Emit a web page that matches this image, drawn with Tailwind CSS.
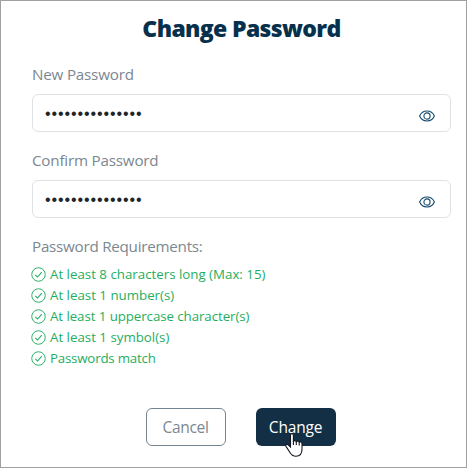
<!DOCTYPE html>
<html lang="en">
<head>
  <meta charset="utf-8">
  <title>Change Password</title>
  <script src="https://cdn.jsdelivr.net/npm/@tailwindcss/browser@4"></script>
</head>
<body class="bg-white font-['Open_Sans','Noto_Sans',sans-serif]">
  <svg class="hidden">
    <symbol id="check" viewBox="0 0 16 16">
      <circle cx="8" cy="8" r="7.2" fill="none" stroke="currentColor" stroke-width="1" />
      <path d="M4.6 8.3L7 10.7L11.5 5.4" fill="none" stroke="currentColor" stroke-width="1.1" />
    </symbol>
    <symbol id="eye" viewBox="0 0 16 16">
      <path d="M.6 8C3.6 1.4 12.4 1.4 15.4 8C12.4 14.6 3.6 14.6 .6 8z" fill="none" stroke="currentColor" stroke-width="1.1" />
      <circle cx="8" cy="8" r="3.1" fill="none" stroke="currentColor" stroke-width="1.1" />
    </symbol>
  </svg>

  <form class="flex h-[468px] w-[467px] flex-col border border-[#a0a0a0] pr-[15px] pl-[31px]">
    <h1 class="mt-[11px] text-center text-[23px] leading-8 font-extrabold whitespace-nowrap text-[#06304b] tracking-[-0.65px]">Change Password</h1>

    <label for="new" class="mt-[18px] text-[15.2px] leading-6 text-[#7b8791] tracking-[-0.2px]">New Password</label>
    <div class="mt-2 flex h-[38px] items-center rounded-md border border-[#dee2e6] pr-[15px] pl-3">
      <input id="new" type="password" value="passwordpasswor" class="min-w-0 grow pt-0.5 font-['Liberation_Sans',sans-serif] text-[16px] tracking-[0.9px] text-[#212529] outline-none">
      <svg class="mt-[5px] h-4 w-4 text-[#12486a]"><use href="#eye" /></svg>
    </div>

    <label for="confirm" class="mt-4 text-[15.2px] leading-6 text-[#7b8791] tracking-[-0.2px]">Confirm Password</label>
    <div class="mt-2 flex h-[38px] items-center rounded-md border border-[#dee2e6] pr-[15px] pl-3">
      <input id="confirm" type="password" value="passwordpasswor" class="min-w-0 grow pt-0.5 font-['Liberation_Sans',sans-serif] text-[16px] tracking-[0.9px] text-[#212529] outline-none">
      <svg class="mt-[5px] h-4 w-4 text-[#12486a]"><use href="#eye" /></svg>
    </div>

    <p class="mt-4 text-[15.2px] leading-6 text-[#7b8791] tracking-[-0.25px]">Password Requirements:</p>
    <ul class="mt-1.5 text-[13.3px] leading-[21px] text-[#1fae5e]">
      <li class="flex items-center gap-1"><svg class="-ml-px h-[15px] w-[15px]"><use href="#check" /></svg><span>At least 8 characters long (Max: 15)</span></li>
      <li class="flex items-center gap-1"><svg class="-ml-px h-[15px] w-[15px]"><use href="#check" /></svg><span>At least 1 number(s)</span></li>
      <li class="flex items-center gap-1"><svg class="-ml-px h-[15px] w-[15px]"><use href="#check" /></svg><span class="tracking-[-0.07px]">At least 1 uppercase character(s)</span></li>
      <li class="flex items-center gap-1"><svg class="-ml-px h-[15px] w-[15px]"><use href="#check" /></svg><span>At least 1 symbol(s)</span></li>
      <li class="flex items-center gap-1"><svg class="-ml-px h-[15px] w-[15px]"><use href="#check" /></svg><span class="tracking-[-0.2px]">Passwords match</span></li>
    </ul>

    <div class="mt-[39px] mr-0.5 flex justify-center gap-[30px]">
      <button type="button" class="h-[38px] w-20 rounded-md border border-[#748591] pt-0.5 text-[15.5px] text-[#7b8791] tracking-[-0.3px]">Cancel</button>
      <button type="submit" class="relative h-[38px] w-20 rounded-md bg-[#122f45] pt-0.5 text-[15.5px] text-white tracking-[-0.2px]">
        Change
        <svg class="absolute top-[25px] left-[29px] h-6 w-[18px]" viewBox="0 0 18 24">
          <path d="M5.5 14V2.2C5.5 .2 8.4 .2 8.4 2.2V9C8.4 7.2 11.3 7.2 11.3 9.2C11.4 7.7 14.2 7.8 14.2 9.8C14.4 8.6 17 8.8 17 10.6V16C17 20.5 15 23.3 11 23.3C7.4 23.3 6 21.5 4.8 19.3L1 13.4C0 11.7 2.1 10.6 3.4 12z" fill="#fff" stroke="#15151f" stroke-width="1.1" />
          <path d="M8.4 8.5V12M11.3 9V12M14.2 9.8V12.5" fill="none" stroke="#15151f" stroke-width="1.1" />
        </svg>
      </button>
    </div>
  </form>
</body>
</html>
